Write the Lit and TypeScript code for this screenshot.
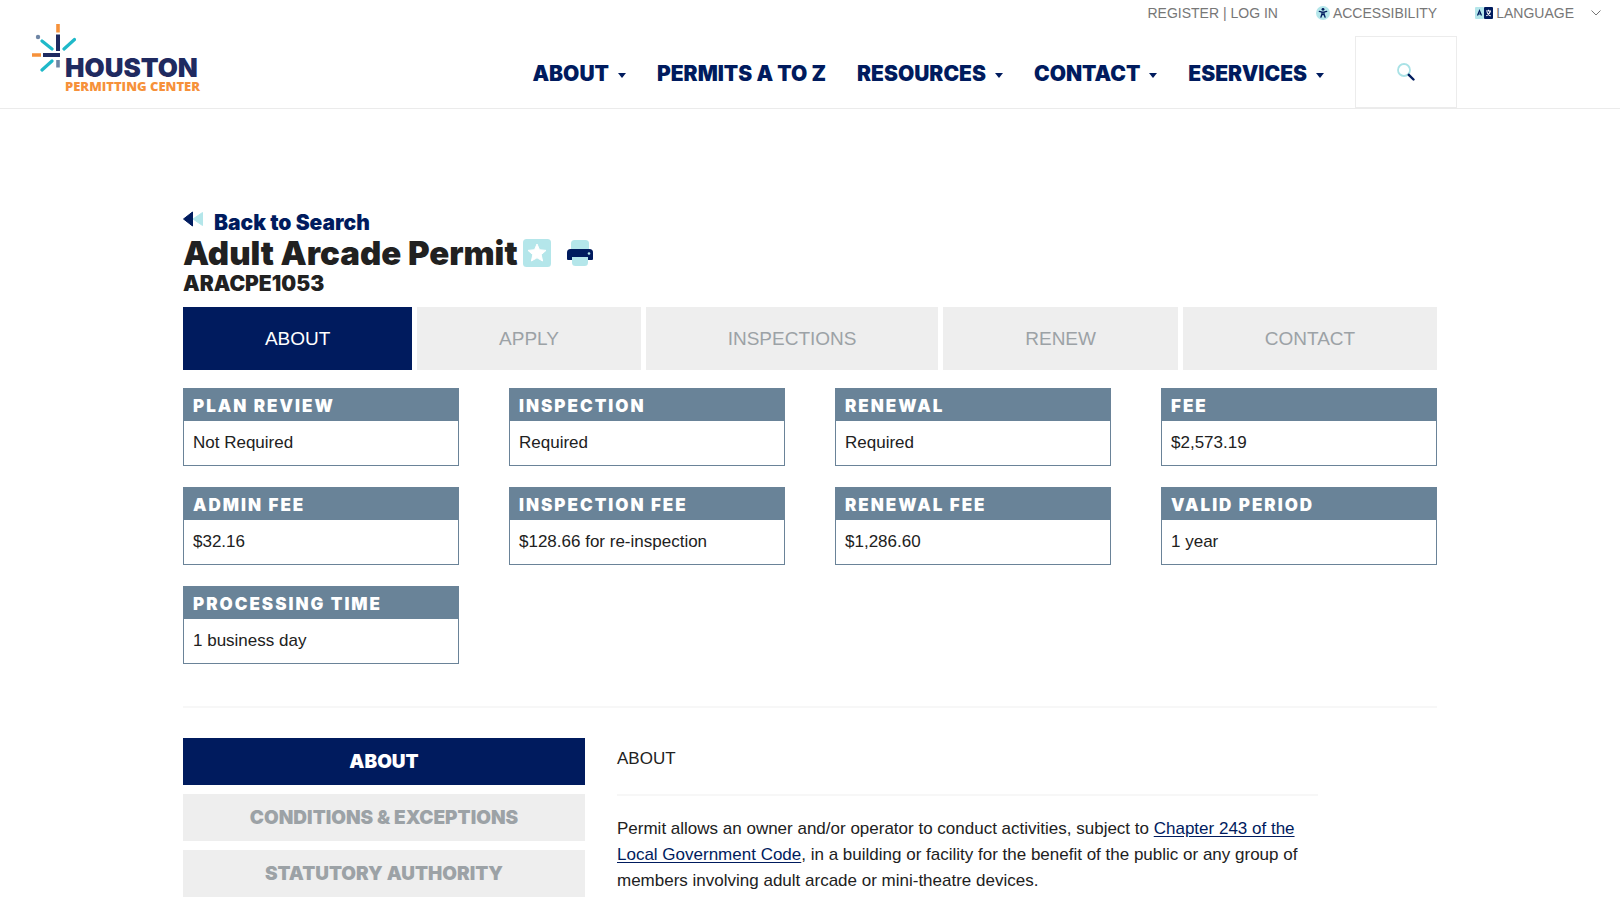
import { LitElement, html, css, svg, nothing } from "lit";
import { customElement, property, state } from "lit/decorators.js";
import { classMap } from "lit/directives/class-map.js";

const NAV_ITEMS = [
  { label: "ABOUT", menu: true },
  { label: "PERMITS A TO Z", menu: false },
  { label: "RESOURCES", menu: true },
  { label: "CONTACT", menu: true },
  { label: "ESERVICES", menu: true },
];

const FACTS = [
  ["PLAN REVIEW", "Not Required"],
  ["INSPECTION", "Required"],
  ["RENEWAL", "Required"],
  ["FEE", "$2,573.19"],
  ["ADMIN FEE", "$32.16"],
  ["INSPECTION FEE", "$128.66 for re-inspection"],
  ["RENEWAL FEE", "$1,286.60"],
  ["VALID PERIOD", "1 year"],
  ["PROCESSING TIME", "1 business day"],
];

const TABS = ["ABOUT", "APPLY", "INSPECTIONS", "RENEW", "CONTACT"];
const SECTIONS = ["ABOUT", "CONDITIONS & EXCEPTIONS", "STATUTORY AUTHORITY"];

const burst = svg`
  <g fill="none" stroke-width="3.600">
    <path stroke="#f6913a" d="M26 0V8.500M0 31H9"/>
    <path stroke="#1f2a60" stroke-width="4" d="M26 10.500V27M11 31H28"/>
    <path stroke="#1fb9c9" stroke-linecap="round" stroke-width="3.200" d="M10 17L20 25M42.500 15.500L32 25M20 37L10 46"/>
    <path stroke="#6f86a5" d="M26 36V43.500"/>
  </g>
  <circle cx="6" cy="13" r="2.200" fill="#6f86a5"/>`;

@customElement("site-header")
class SiteHeader extends LitElement {
  static styles = css`
    :host {
      display: block;
      border-bottom: 1px solid #ebebeb;
      font-family: "Liberation Sans", Arial, sans-serif;
    }
    a {
      color: inherit;
      text-decoration: none;
    }
    button {
      border: 0;
      padding: 0;
      background: none;
      color: inherit;
      font: inherit;
      cursor: pointer;
    }
    .bar {
      display: flex;
      justify-content: space-between;
    }
    .logo {
      display: flex;
      align-items: flex-start;
      padding: 24px 0 0 32px;
    }
    .burst {
      display: block;
      width: 44px;
      height: 48px;
      margin-right: -11px;
    }
    .wordmark {
      display: flex;
      flex-direction: column;
      padding-top: 32px;
      font-weight: 900;
      white-space: nowrap;
    }
    .city {
      color: #1f2a60;
      font-family: Inter, sans-serif;
      font-size: 26px;
      line-height: 24px;
    }
    .center {
      color: #f6913a;
      font-family: "Open Sans", sans-serif;
      font-size: 13px;
      line-height: 13px;
    }
    .right {
      display: flex;
      flex-direction: column;
      align-items: flex-end;
    }
    .utility {
      display: flex;
      align-items: center;
      height: 26px;
      padding-right: 19px;
      gap: 38px;
      color: #777;
      font-size: 14px;
      line-height: 16px;
      white-space: nowrap;
    }
    .utility a,
    .utility button {
      display: inline-flex;
      align-items: center;
      gap: 3px;
    }
    .utility .account a {
      display: inline;
    }
    .chevron {
      margin-left: 14px;
    }
    .main {
      display: flex;
      align-items: center;
      gap: 31px;
      margin-top: 10px;
      padding-right: 163px;
      color: #001b5e;
      font-family: Inter, sans-serif;
      font-weight: 900;
      font-size: 21px;
      line-height: 24px;
      white-space: nowrap;
    }
    .main a {
      display: flex;
      align-items: center;
      gap: 9px;
      padding-top: 3px;
    }
    .caret {
      border: 4px solid transparent;
      border-top: 5px solid currentColor;
      border-bottom: 0;
      margin-top: 4px;
    }
    .search {
      box-sizing: border-box;
      width: 102px;
      height: 72px;
      padding-top: 4px;
      border: 1px solid #ececec;
    }
  `;

  render() {
    return html`
      <header class="bar">
        <a class="logo" href="#home" aria-label="Houston Permitting Center">
          <svg class="burst" viewBox="0 0 44 48">${burst}</svg>
          <span class="wordmark">
            <span class="city">HOUSTON</span>
            <span class="center">PERMITTING CENTER</span>
          </span>
        </a>
        <div class="right">
          <div class="utility">
            <span class="account"><a href="#register">REGISTER</a> | <a href="#login">LOG IN</a></span>
            <a href="#accessibility">
              <svg width="14" height="14" viewBox="0 0 14 14">
                <circle cx="7" cy="7" r="7" fill="#b4e6ea" />
                <circle cx="7" cy="3.300" r="1.400" fill="#001b5e" />
                <path d="M3.300 5.400L6 6.100V8L4.900 11.200M10.700 5.400L8 6.100V8L9.100 11.200M6 6.200H8V8.500H6Z" fill="none" stroke="#001b5e" stroke-width="1.300" stroke-linecap="round" stroke-linejoin="round" />
              </svg>
              ACCESSIBILITY
            </a>
            <button type="button">
              <svg width="18" height="12" viewBox="0 0 18 12">
                <rect width="9" height="12" rx="1" fill="#b4e6ea" />
                <rect x="9" width="9" height="12" rx="1" fill="#001b5e" />
                <path d="M2.500 8.500L4.500 3.500L6.500 8.500M3.300 7H5.700" fill="none" stroke="#001b5e" stroke-width="1.200" />
                <path d="M11 4H16M13.500 2.800V4M15.300 4C15 6.500 13 8 11.300 8.700M12 5.200C12.700 7 14 8.200 15.700 8.900" fill="none" stroke="#fff" stroke-width="1.100" />
              </svg>
              LANGUAGE
              <svg class="chevron" width="10" height="6" viewBox="0 0 10 6">
                <path d="M0.500 0.500L5 5L9.500 0.500" fill="none" stroke="#777" />
              </svg>
            </button>
          </div>
          <nav class="main">
            ${NAV_ITEMS.map(
              (item) => html`<a href="#">${item.label}${item.menu ? html`<span class="caret"></span>` : nothing}</a>`
            )}
            <button class="search" type="button" aria-label="Search">
              <svg width="18" height="18" viewBox="0 0 18 18">
                <circle cx="7" cy="7" r="6" fill="none" stroke="#a9e2e6" stroke-width="1.800" />
                <path d="M11.800 11.800L16.500 16.500" stroke="#001b5e" stroke-width="2.400" stroke-linecap="round" />
              </svg>
            </button>
          </nav>
        </div>
      </header>
    `;
  }
}

@customElement("fact-card")
class FactCard extends LitElement {
  static styles = css`
    :host {
      display: block;
      border: 1px solid #6a8398;
      color: #212121;
      font-family: "Liberation Sans", Arial, sans-serif;
      font-size: 17px;
    }
    h2 {
      margin: 0;
      padding: 5px 9px 3px;
      background: #698398;
      color: #fff;
      font-family: Inter, sans-serif;
      font-weight: 900;
      font-size: 17px;
      line-height: 24px;
      letter-spacing: 2px;
    }
    p {
      margin: 0;
      padding: 9px;
      line-height: 26px;
    }
  `;

  @property() heading = "";
  @property() value = "";

  render() {
    return html`<h2>${this.heading}</h2><p>${this.value}</p>`;
  }
}

@customElement("app-root")
class AppRoot extends LitElement {
  static styles = css`
    :host {
      display: block;
      min-height: 100vh;
      background: #fff;
      color: #212121;
      font-family: "Liberation Sans", Arial, sans-serif;
      font-size: 17px;
      line-height: 26px;
    }
    main {
      max-width: 1254px;
      margin: 0 auto;
      padding: 102px 32px 14px;
    }
    button {
      border: 0;
      padding: 0;
      background: none;
      font: inherit;
      cursor: pointer;
    }
    .heavy {
      font-family: Inter, sans-serif;
      font-weight: 900;
      font-size: 21px;
      line-height: 24px;
    }
    .back {
      display: flex;
      gap: 11px;
      color: #001b5e;
      text-decoration: none;
    }
    .title-row {
      display: flex;
      align-items: center;
      gap: 5px;
    }
    h1 {
      margin: 0;
      font-family: Inter, sans-serif;
      font-weight: 900;
      font-size: 33px;
      line-height: 36px;
    }
    .title-row button {
      display: flex;
    }
    .title-row .print {
      margin-left: 11px;
    }
    .code {
      margin: 1px 0 0;
    }
    .tabs {
      display: flex;
      gap: 5px;
      margin-top: 11px;
    }
    .tab,
    .section {
      background: #eee;
      color: #9ca2a6;
      text-align: center;
    }
    .tab {
      flex: auto;
      height: 63px;
      font-size: 19px;
    }
    .active {
      background: #001b5e;
      color: #fff;
    }
    .facts {
      display: grid;
      grid-template-columns: repeat(4, minmax(0, 1fr));
      gap: 21px 50px;
      margin-top: 18px;
      padding-bottom: 42px;
      border-bottom: 2px solid #f7f7f7;
    }
    .detail {
      display: grid;
      grid-template-columns: 402fr 701fr 87fr;
      gap: 32px;
      align-items: start;
      margin-top: 30px;
    }
    .sections {
      display: flex;
      flex-direction: column;
      gap: 9px;
    }
    .section {
      height: 47px;
      font-family: Inter, sans-serif;
      font-weight: 900;
      font-size: 19px;
    }
    .section.active {
      color: #fff;
    }
    h3 {
      margin: 0;
      padding: 8px 0 22px;
      border-bottom: 2px solid #f7f7f7;
      font-weight: 400;
      font-size: 17px;
    }
    .copy p {
      margin: 20px 0 0;
    }
    .copy a {
      color: #001b5e;
      text-underline-offset: 2px;
    }
  `;

  @state() private tab = "ABOUT";
  @state() private section = "ABOUT";

  render() {
    return html`
      <site-header></site-header>
      <main>
        <a class="back heavy" href="#search">
          <svg width="20" height="16" viewBox="0 0 20 16">
            <path d="M19.500 1.500V14.500L10 8Z" fill="#b4e6ea" stroke="#b4e6ea" stroke-linejoin="round" />
            <path d="M9.500 1V15L0.500 8Z" fill="#001b5e" stroke="#001b5e" stroke-linejoin="round" />
          </svg>
          Back to Search
        </a>
        <div class="title-row">
          <h1>Adult Arcade Permit</h1>
          <button type="button" aria-label="Add to favorites">
            <svg width="28" height="28" viewBox="0 0 28 28">
              <rect width="28" height="28" rx="3.500" fill="#b4e6ea" />
              <path d="M14 5L16.500 10.700L23 11.400L18.200 15.700L19.600 22L14 18.800L8.400 22L9.800 15.700L5 11.400L11.500 10.700Z" fill="#fff" stroke="#fff" stroke-linejoin="round" />
            </svg>
          </button>
          <button class="print" type="button" aria-label="Print">
            <svg width="26" height="26" viewBox="0 0 26 26">
              <path d="M4 9V3.500Q4 0 7.500 0H18.500Q22 0 22 3.500V9Z" fill="#b4e6ea" />
              <path d="M0 19V12.500Q0 9 3.500 9H22.500Q26 9 26 12.500V19Q26 20 25 20H1Q0 20 0 19Z" fill="#001b5e" />
              <path d="M5 17H21V22.500Q21 26 17.500 26H8.500Q5 26 5 22.500Z" fill="#b4e6ea" />
              <circle cx="22" cy="13.500" r="1.300" fill="#b4e6ea" />
            </svg>
          </button>
        </div>
        <p class="code heavy">ARACPE1053</p>

        <nav class="tabs">
          ${TABS.map(
            (t) => html`<button
              type="button"
              class=${classMap({ tab: true, active: t === this.tab })}
              @click=${() => (this.tab = t)}
            >${t}</button>`
          )}
        </nav>

        <div class="facts">
          ${FACTS.map(([h, v]) => html`<fact-card .heading=${h} .value=${v}></fact-card>`)}
        </div>

        <div class="detail">
          <nav class="sections">
            ${SECTIONS.map(
              (s) => html`<button
                type="button"
                class=${classMap({ section: true, active: s === this.section })}
                @click=${() => (this.section = s)}
              >${s}</button>`
            )}
          </nav>
          <section class="copy">
            <h3>ABOUT</h3>
            <p>
              Permit allows an owner and/or operator to conduct activities, subject to
              <a href="#chapter-243">Chapter 243 of the Local Government Code</a>, in a building or facility for the
              benefit of the public or any group of members involving adult arcade or mini-theatre devices.
            </p>
          </section>
        </div>
      </main>
    `;
  }
}
